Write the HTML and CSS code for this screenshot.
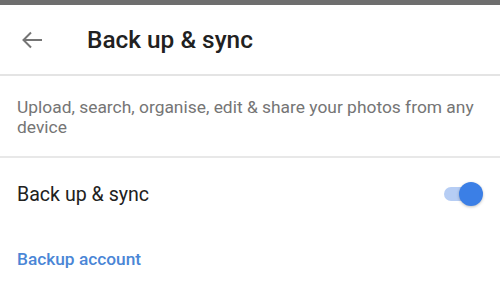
FILE: index.html
```html
<!DOCTYPE html>
<html>
<head>
<meta charset="utf-8">
<link rel="stylesheet" href="styles.css">
</head>
<body>
<div class="statusbar"></div>
<header class="appbar">
  <svg class="back" width="22" height="18" viewBox="0 0 22 18" fill="none" stroke="#757575" stroke-width="2">
    <path d="M21 9H2.5M10 1.5L2.5 9L10 16.5"/>
  </svg>
  <h1 class="title">Back up &amp; sync</h1>
</header>
<p class="desc">Upload, search, organise, edit &amp; share your photos from any device</p>
<div class="row">
  <span class="row-label">Back up &amp; sync</span>
  <div class="switch"><div class="track"></div><div class="thumb"></div></div>
</div>
<div class="link">Backup account</div>
</body>
</html>
```

FILE: styles.css
```css
html, body {
  margin: 0;
  padding: 0;
  background: #ffffff;
}
body {
  width: 500px;
  height: 281px;
  overflow: hidden;
  font-family: Roboto, "Liberation Sans", sans-serif;
}
.statusbar {
  height: 5px;
  background: #6e6e6e;
}
.appbar {
  height: 69px;
  display: flex;
  align-items: center;
  border-bottom: 2px solid #e4e4e4;
}
.back {
  margin-left: 21px;
  flex: none;
}
.title {
  margin: 0 0 0 44px;
  font-size: 24.4px;
  font-weight: 500;
  color: #212121;
}
.desc {
  margin: 0;
  padding: 21px 17px 19px 17px;
  font-size: 17.4px;
  line-height: 20px;
  color: #757575;
  border-bottom: 2px solid #e8e8e8;
}
.row {
  height: 72px;
  display: flex;
  align-items: center;
  justify-content: space-between;
  padding: 0 17px;
}
.row-label {
  font-size: 19.6px;
  color: #212121;
}
.switch {
  position: relative;
  width: 40px;
  height: 24px;
}
.track {
  position: absolute;
  left: 1px;
  top: 5px;
  width: 37px;
  height: 14px;
  border-radius: 7px;
  background: #b6cdf4;
}
.thumb {
  position: absolute;
  right: 0;
  top: 0;
  width: 24px;
  height: 24px;
  border-radius: 50%;
  background: #3b7fe6;
  box-shadow: 0 1px 3px rgba(0,0,0,0.25);
}
.link {
  padding: 19px 17px 0;
  font-size: 17.3px;
  font-weight: 500;
  color: #4a86d6;
}
```
